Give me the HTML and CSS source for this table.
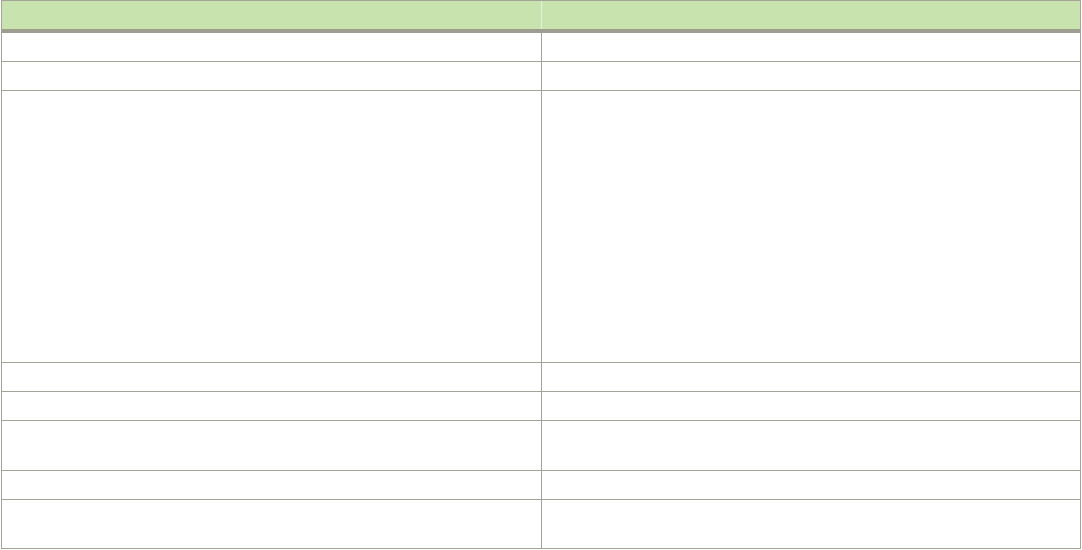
FILE: index.html
```html
<!DOCTYPE html>
<html>
<head>
<meta charset="utf-8">
<link rel="stylesheet" href="styles.css">
</head>
<body>
<div class="table">
  <div class="row head">
    <div class="cell first"></div>
    <div class="cell"></div>
  </div>
  <div class="row h28"><div class="cell first"></div><div class="cell"></div></div>
  <div class="row h28"><div class="cell first"></div><div class="cell"></div></div>
  <div class="row h271"><div class="cell first"></div><div class="cell"></div></div>
  <div class="row h28"><div class="cell first"></div><div class="cell"></div></div>
  <div class="row h28"><div class="cell first"></div><div class="cell"></div></div>
  <div class="row h49"><div class="cell first"></div><div class="cell"></div></div>
  <div class="row h28"><div class="cell first"></div><div class="cell"></div></div>
  <div class="row h48"><div class="cell first"></div><div class="cell"></div></div>
</div>
</body>
</html>
```

FILE: styles.css
```css
html, body {
  margin: 0;
  padding: 0;
  background: #ffffff;
  font-family: "Liberation Sans", Arial, sans-serif;
}
.table {
  margin-left: 1px;
  width: 1078px;
  border-top: 1px solid #a3a397;
  border-left: 1px solid #a3a397;
  border-right: 1px solid #a3a397;
}
.row {
  display: flex;
  border-bottom: 1px solid #a3a397;
}
.head {
  height: 28px;
  background: #c8e3ae;
  border-bottom: 4px solid #9d9e8f;
}
.cell.first {
  width: 539px;
  border-right: 1px solid #a3a397;
}
.cell {
  flex: 1;
}
.cell.first { flex: none; }
.head .cell.first {
  border-right-color: #e4f1d8;
}
.h28 { height: 28px; }
.h271 { height: 271px; }
.h49 { height: 49px; }
.h48 { height: 48px; }
```
